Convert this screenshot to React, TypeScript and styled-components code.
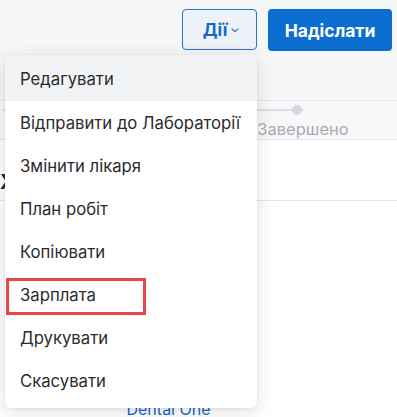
import styled, { createGlobalStyle } from "styled-components";

const GlobalStyle = createGlobalStyle`
  * { box-sizing: border-box; }
  html, body { margin: 0; padding: 0; }
  body {
    background: #ffffff;
    font-family: Inter, "Open Sans", "Liberation Sans", sans-serif;
    overflow: hidden;
  }
`;

const Page = styled.div`
  width: 397px;
  height: 417px;
  display: flex;
  flex-direction: column;
  position: relative;
  overflow: hidden;
`;

const Header = styled.div`
  height: 101px;
  background: #f5f6f8;
  border-bottom: 1px solid #e4e6ea;
  display: flex;
  justify-content: flex-end;
  align-items: flex-start;
  gap: 11px;
  padding: 9px 5px 0 0;
`;

const ActionsWrap = styled.div`
  position: relative;
`;

const OutlineButton = styled.button`
  width: 75px;
  height: 41px;
  border: 1px solid #2a76c6;
  border-radius: 4px;
  background: #edf2f9;
  color: #1769c4;
  font-family: inherit;
  font-weight: 700;
  font-size: 17px;
  display: flex;
  align-items: center;
  justify-content: center;
  gap: 3px;
  padding: 0 0 0 4px;
`;

const PrimaryButton = styled.button`
  width: 124px;
  height: 42px;
  border: none;
  border-radius: 4px;
  background: #0b6dcf;
  color: #ffffff;
  font-family: inherit;
  font-weight: 700;
  font-size: 17.5px;
`;

const Stepper = styled.div`
  height: 39px;
  background: #f7f8fa;
  border-bottom: 1px solid #e4e6ea;
  display: flex;
  justify-content: flex-end;
  padding-right: 48px;
`;

const Step = styled.div`
  width: 96px;
  display: flex;
  flex-direction: column;
  align-items: center;
  position: relative;
  padding-top: 4px;
  margin-right: -2px;
`;

const StepTrack = styled.div`
  position: absolute;
  top: 8px;
  right: 50%;
  width: 300px;
  height: 2px;
  background: #dadde2;
`;

const StepDot = styled.span`
  width: 10px;
  height: 10px;
  border-radius: 50%;
  background: #d5d9df;
  position: relative;
  margin-left: -12px;
`;

const StepLabel = styled.span`
  margin-top: 4px;
  font-size: 16.5px;
  color: #a7abb2;
`;

const Section = styled.div`
  height: 61px;
  border-bottom: 1px solid #e4e6ea;
  display: flex;
  align-items: center;
  padding-top: 24px;
`;

const SectionTitle = styled.h2`
  margin: 0;
  font-size: 20px;
  font-weight: 700;
  color: #14233f;
`;

const Footer = styled.div`
  flex: 1;
  display: flex;
  align-items: flex-end;
  justify-content: center;
  padding: 0 60px 0 0;
`;

const FooterLink = styled.a`
  font-size: 16px;
  line-height: 16px;
  color: #1a6ac4;
  margin-bottom: 0;
`;

const Menu = styled.ul`
  position: absolute;
  top: 46px;
  right: 0;
  width: 252px;
  margin: 0;
  padding: 0 0 6px;
  list-style: none;
  background: #ffffff;
  border-radius: 6px;
  box-shadow: 0 4px 20px rgba(0, 0, 0, 0.12), 0 1px 4px rgba(0, 0, 0, 0.06);
  z-index: 10;
  overflow: hidden;
`;

const MenuItem = styled.li<{ $active?: boolean }>`
  height: 43px;
  display: flex;
  align-items: center;
  padding-left: 15px;
  font-size: 16.7px;
  color: #2a2b2e;
  white-space: nowrap;
  position: relative;
  background: ${(p) => (p.$active ? "#f2f3f5" : "#ffffff")};

  &:first-child {
    height: 46px;
    padding-top: 1px;
  }
`;

const Mark = styled.span`
  position: absolute;
  left: 1px;
  top: 5px;
  width: 140px;
  height: 37px;
  border: 3px solid #e9454a;
  pointer-events: none;
`;

const Chevron = () => (
  <svg width="10" height="10" viewBox="0 0 10 10" fill="none">
    <path d="M2 3.8 L5 6.6 L8 3.8" stroke="#1769c4" strokeWidth="1.1" strokeLinecap="round" strokeLinejoin="round" />
  </svg>
);

const items = [
  "Редагувати",
  "Відправити до Лабораторії",
  "Змінити лікаря",
  "План робіт",
  "Копіювати",
  "Зарплата",
  "Друкувати",
  "Скасувати",
];

export default function App() {
  return (
    <Page>
      <GlobalStyle />
      <Header>
        <ActionsWrap>
          <OutlineButton>
            Дії <Chevron />
          </OutlineButton>
          <Menu>
            {items.map((label, i) => (
              <MenuItem key={label} $active={i === 0}>
                {label}
                {label === "Зарплата" && <Mark />}
              </MenuItem>
            ))}
          </Menu>
        </ActionsWrap>
        <PrimaryButton>Надіслати</PrimaryButton>
      </Header>
      <Stepper>
        <Step>
          <StepTrack />
          <StepDot />
          <StepLabel>Завершено</StepLabel>
        </Step>
      </Stepper>
      <Section>
        <SectionTitle>Х</SectionTitle>
      </Section>
      <Footer>
        <FooterLink>Dental One</FooterLink>
      </Footer>
    </Page>
  );
}
